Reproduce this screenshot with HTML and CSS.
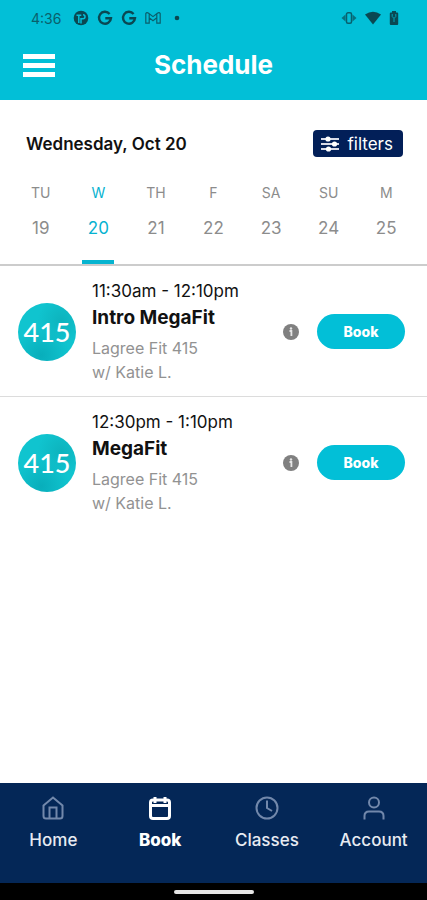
FILE: index.html
```html
<!DOCTYPE html>
<html lang="en">
<head>
<meta charset="utf-8">
<meta name="viewport" content="width=device-width, initial-scale=1">
<title>Schedule</title>
<link rel="stylesheet" href="styles.css">
</head>
<body>
<div class="app">
  <header class="top">
    <div class="status">
      <span class="clock">4:36</span>
      <svg width="16" height="16" viewBox="0 0 16 16" aria-hidden="true"><circle cx="8" cy="8" r="7.3" fill="#0a4852"/><path d="M3.500 5.300H8.300M5.800 5V13M8 13.500V8.800H10a2 2 0 0 0 0-4" fill="none" stroke="#02bfd7" stroke-width="1.5"/></svg>
      <svg width="16" height="16" viewBox="0 0 16 16" aria-hidden="true"><path d="M12.6 3.9A6 6 0 1 0 14 8.2H8.3" fill="none" stroke="#0a4852" stroke-width="2.4"/></svg>
      <svg width="16" height="16" viewBox="0 0 16 16" aria-hidden="true"><path d="M12.6 3.9A6 6 0 1 0 14 8.2H8.3" fill="none" stroke="#0a4852" stroke-width="2.4"/></svg>
      <svg width="16" height="16" viewBox="0 0 16 16" aria-hidden="true"><path d="M.8 13.2V3.5Q1.8 1.8 3.6 3.2L8 6.6l4.4-3.4Q14.2 1.8 15.2 3.5v9.7h-3.4V7.8L8 10.7 4.2 7.8v5.400zM4.200 7.800V4M11.800 7.800V4" fill="none" stroke="#0a5f6c" stroke-width="1.200"/></svg>
      <svg class="more" width="6" height="6" viewBox="0 0 6 6" aria-hidden="true"><circle cx="3" cy="3" r="2.300" fill="#0a4852"/></svg>
      <svg class="right" width="16" height="16" viewBox="0 0 16 16" aria-hidden="true"><path d="M4.500 4.500v7L.5 8zM11.500 4.500v7l4-3.500z" fill="#08707f"/><rect x="5.500" y="2.800" width="5" height="10.400" rx="1.500" fill="#02bfd7" stroke="#08606d" stroke-width="1.500"/></svg>
      <svg width="16" height="16" viewBox="0 0 16 16" aria-hidden="true"><path d="M0 4.500Q8-1 16 4.500L8 14.500z" fill="#0a4852"/></svg>
      <svg width="10" height="16" viewBox="0 0 10 16" aria-hidden="true"><path d="M3 1h4v1.500h1.200q1 0 1 1V14q0 1-1 1H1.800q-1 0-1-1V3.500q0-1 1-1H3z" fill="#0a4852"/><path d="M3.200 4v2.500L5 8.500l1.800-2V4M5 8.500V12" fill="none" stroke="#02a3b8" stroke-width="1"/></svg>
    </div>
    <div class="bar">
      <button class="menu" type="button" aria-label="Menu"><i></i><i></i><i></i></button>
      <h1>Schedule</h1>
    </div>
  </header>

  <main>
    <div class="date-row">
      <h2>Wednesday, Oct 20</h2>
      <button class="filters" type="button">
        <svg width="18" height="16" viewBox="0 0 18 16" aria-hidden="true"><path d="M0 3h18M0 8h18M0 13h18" stroke="#d8dbe8" stroke-width="1.800"/><g fill="#fff"><circle cx="7" cy="3" r="2.600"/><circle cx="13.500" cy="8" r="2.600"/><circle cx="7.500" cy="13" r="2.600"/></g></svg>
        <span>filters</span>
      </button>
    </div>
    <nav class="week" aria-label="Days">
      <a href="#19"><span>TU</span><b>19</b></a>
      <a href="#20" class="active" aria-current="date"><span>W</span><b>20</b></a>
      <a href="#21"><span>TH</span><b>21</b></a>
      <a href="#22"><span>F</span><b>22</b></a>
      <a href="#23"><span>SA</span><b>23</b></a>
      <a href="#24"><span>SU</span><b>24</b></a>
      <a href="#25"><span>M</span><b>25</b></a>
    </nav>

    <ul class="classes">
      <li>
        <div class="logo">415</div>
        <div class="info">
          <p class="time">11:30am - 12:10pm</p>
          <h3>Intro MegaFit</h3>
          <p class="sub">Lagree Fit 415</p>
          <p class="sub">w/ Katie L.</p>
        </div>
        <button class="details" type="button" aria-label="Class details"><svg width="16" height="16" viewBox="0 0 16 16" aria-hidden="true"><circle cx="8" cy="8" r="8" fill="#808080"/><circle cx="8" cy="4.500" r="1.200" fill="#e6e6e6"/><path d="M6.500 7H8.400v5" fill="none" stroke="#e6e6e6" stroke-width="1.800"/></svg></button>
        <button class="book" type="button">Book</button>
      </li>
      <li>
        <div class="logo">415</div>
        <div class="info">
          <p class="time">12:30pm - 1:10pm</p>
          <h3>MegaFit</h3>
          <p class="sub">Lagree Fit 415</p>
          <p class="sub">w/ Katie L.</p>
        </div>
        <button class="details" type="button" aria-label="Class details"><svg width="16" height="16" viewBox="0 0 16 16" aria-hidden="true"><circle cx="8" cy="8" r="8" fill="#808080"/><circle cx="8" cy="4.500" r="1.200" fill="#e6e6e6"/><path d="M6.500 7H8.400v5" fill="none" stroke="#e6e6e6" stroke-width="1.800"/></svg></button>
        <button class="book" type="button">Book</button>
      </li>
    </ul>
  </main>

  <nav class="tabs" aria-label="Main">
    <a href="#home"><svg width="24" height="24" viewBox="0 0 24 24" aria-hidden="true"><path d="M2.500 9.500 12 1.500l9.500 8V20a2.500 2.500 0 0 1-2.500 2.500H5A2.500 2.500 0 0 1 2.500 20zM8.500 22V11.500h7V22"/></svg>Home</a>
    <a href="#book" class="active" aria-current="page"><svg width="24" height="24" viewBox="0 0 24 24" aria-hidden="true"><rect x="2.500" y="4" width="19" height="18.500" rx="2.500"/><path d="M2 9.500h20M7 1v6M17 1v6"/></svg>Book</a>
    <a href="#classes"><svg width="24" height="24" viewBox="0 0 24 24" aria-hidden="true"><circle cx="12" cy="12" r="10.500"/><path d="M12 4.500V12l5 3"/></svg>Classes</a>
    <a href="#account"><svg width="24" height="24" viewBox="0 0 24 24" aria-hidden="true"><circle cx="12" cy="6.500" r="5"/><path d="M2.500 23.500V20q0-4.500 4.500-4.500h10Q21.500 15.500 21.500 20v3.500"/></svg>Account</a>
  </nav>
  <div class="system"><i></i></div>
</div>
</body>
</html>
```
FILE: styles.css
```css
* {
  box-sizing: border-box;
  margin: 0;
  padding: 0;
}

body {
  font-family: Inter, "Liberation Sans", sans-serif;
  color: #111;
  background: #fff;
}

button {
  border: 0;
  font: inherit;
  background: none;
}

a {
  color: inherit;
  text-decoration: none;
}

svg {
  flex: none;
}

.app {
  min-height: 100vh;
  display: flex;
  flex-direction: column;
}

.top {
  background: #02bfd7;
}

.status {
  display: flex;
  align-items: center;
  gap: 8px;
  height: 36px;
  padding: 0 28px 0 31px;
}

.clock {
  margin-right: 4px;
  font-size: 14px;
  color: #0a5f6c;
}

.more {
  margin-left: 5px;
}

.right {
  margin-left: auto;
}

.bar {
  display: grid;
  grid-template-columns: 32px 1fr 32px;
  align-items: center;
  height: 64px;
  padding: 0 23px 6px;
}

.menu {
  display: grid;
  gap: 4px;
}

.menu i {
  height: 5px;
  background: #fff;
}

h1 {
  font-size: 26px;
  line-height: 32px;
  font-weight: 700;
  text-align: center;
  color: #fff;
}

main {
  flex: 1;
}

.date-row {
  display: flex;
  align-items: center;
  justify-content: space-between;
  padding: 30px 24px 0 26px;
}

h2 {
  font-size: 17px;
  line-height: 26px;
  font-weight: 600;
}

.filters {
  display: flex;
  align-items: center;
  gap: 9px;
  height: 27px;
  padding: 0 10px 0 8px;
  border-radius: 4px;
  background: #021f58;
  color: #fff;
  font-size: 17px;
}

.week {
  display: grid;
  grid-template-columns: repeat(7, 1fr);
  padding: 26px 12px 0;
  border-bottom: 2px solid #ccc;
  color: #8c8c8c;
}

.week a {
  display: flex;
  flex-direction: column;
  align-items: center;
  height: 81px;
}

.week span {
  font-size: 14px;
  line-height: 20px;
}

.week b {
  margin-top: 13px;
  font-size: 17px;
  line-height: 24px;
  font-weight: 400;
}

.week .active {
  color: #06b2d0;
}

.week .active::after {
  content: "";
  width: 32px;
  height: 4px;
  margin-top: auto;
  background: #06b4d0;
}

.classes {
  list-style: none;
}

.classes li {
  display: flex;
  align-items: center;
  padding: 13px 22px 12px 18px;
  border-bottom: 1px solid #dcdcdc;
}

.classes li:last-child {
  border-bottom: 0;
}

.logo {
  display: grid;
  place-items: center;
  width: 58px;
  height: 58px;
  margin-right: 16px;
  border-radius: 50%;
  background:
    radial-gradient(circle at 75% 30%, #0db3bd, transparent 40%),
    radial-gradient(circle at 40% 90%, #08aebb, transparent 45%),
    #10c4cf;
  color: #fff;
  font-family: Lato, sans-serif;
  font-size: 27px;
  font-weight: 500;
}

.info {
  flex: 1;
}

.time {
  font-size: 17px;
  line-height: 24px;
}

h3 {
  margin-bottom: 3px;
  font-size: 19px;
  line-height: 30px;
  font-weight: 700;
}

.sub {
  font-size: 16px;
  line-height: 24px;
  color: #929292;
}

.details {
  display: flex;
  margin-right: 18px;
}

.book {
  width: 88px;
  height: 35px;
  border-radius: 18px;
  background: #02bfd7;
  color: #fff;
  font-size: 14px;
  font-weight: 800;
}

.tabs {
  display: grid;
  grid-template-columns: repeat(4, 1fr);
  height: 100px;
  padding-top: 13px;
  background: #042757;
  color: #e8ebf2;
}

.tabs a {
  display: flex;
  flex-direction: column;
  align-items: center;
  gap: 8px;
  font-size: 17px;
  line-height: 24px;
  font-weight: 500;
}

.tabs svg {
  fill: none;
  stroke: #7288ab;
  stroke-width: 2;
}

.tabs .active {
  color: #fff;
  font-weight: 800;
}

.tabs .active svg {
  stroke: #fff;
  stroke-width: 3;
}

.system {
  display: grid;
  place-items: center;
  height: 17px;
  background: #000;
}

.system i {
  width: 80px;
  height: 4px;
  border-radius: 2px;
  background: #e6e6e6;
}
```
